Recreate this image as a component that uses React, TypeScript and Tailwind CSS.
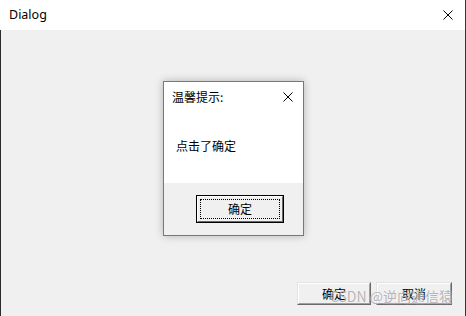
import React from "react";

const cjk = { fontFamily: '"Noto Sans CJK SC", "Noto Sans", sans-serif' };

function XIcon({ size = 11 }: { size?: number }) {
  return (
    <svg width={size} height={size} viewBox="0 0 11 11" fill="none">
      <path d="M0.5 0.5 L10.5 10.5 M10.5 0.5 L0.5 10.5" stroke="#000" strokeWidth="1.1" />
    </svg>
  );
}

function ClassicButton({ label, w }: { label: string; w: string }) {
  return (
    <div
      className={`${w} h-[23px] flex items-center justify-center bg-[#f0f0f0] border border-t-[#e3e3e3] border-l-[#e3e3e3] border-r-[#696969] border-b-[#696969] text-[12px] text-black`}
      style={cjk}
    >
      <div className="w-full h-full flex items-center justify-center border border-t-white border-l-white border-r-[#a0a0a0] border-b-[#a0a0a0]">
        {label}
      </div>
    </div>
  );
}

export default function App() {
  return (
    <div className="w-[466px] h-[316px] flex flex-col bg-white overflow-hidden border-r border-r-[#2e3b32]">
      <div className="h-[30px] bg-white flex items-center justify-between pl-[9px] pr-[12px] shrink-0">
        <span className="text-[12.5px] text-black leading-none" style={{ fontFamily: '"Noto Sans", "Open Sans", sans-serif' }}>
          Dialog
        </span>
        <XIcon size={10} />
      </div>
      <div className="flex-1 bg-[#f0f0f0] relative border-l border-l-[#2b2b2b] flex flex-col justify-end items-end pr-[13px] pb-[11px]">
        <div className="absolute left-[162px] top-[51px] w-[141px] h-[155px] border border-[#787878] bg-[#f0f0f0] flex flex-col shadow-[0_0_8px_rgba(0,0,0,0.25)]">
          <div className="h-[101px] bg-white flex flex-col">
            <div className="h-[30px] flex items-center justify-between pl-[8px] pr-[10px]">
              <span className="text-[12px] text-black" style={cjk}>温馨提示:</span>
              <XIcon size={10} />
            </div>
            <div className="pl-[12px] pt-[25px] text-[12px] text-black" style={cjk}>点击了确定</div>
          </div>
          <div className="flex-1 flex justify-start pt-[12px] pl-[32px]">
            <div className="w-[88px] h-[28px] border border-[#000] bg-[#f0f0f0]">
              <div className="w-full h-full border border-t-white border-l-white border-r-[#696969] border-b-[#696969] p-[2px]">
                <div className="w-full h-full border border-dotted border-black flex items-center justify-center text-[12px] text-black" style={cjk}>
                  确定
                </div>
              </div>
            </div>
          </div>
        </div>
        <div className="flex gap-[5px]">
          <ClassicButton label="确定" w="w-[74px]" />
          <ClassicButton label="取消" w="w-[76px]" />
        </div>
        <div
          className="absolute right-[12px] bottom-[9px] text-[14px] text-[rgba(120,120,120,0.55)] pointer-events-none"
          style={{ fontFamily: '"Noto Sans CJK SC", "Noto Sans", sans-serif', textShadow: "0 0 1px rgba(255,255,255,0.8)" }}
        >
          CSDN @逆向通信猿
        </div>
      </div>
    </div>
  );
}
